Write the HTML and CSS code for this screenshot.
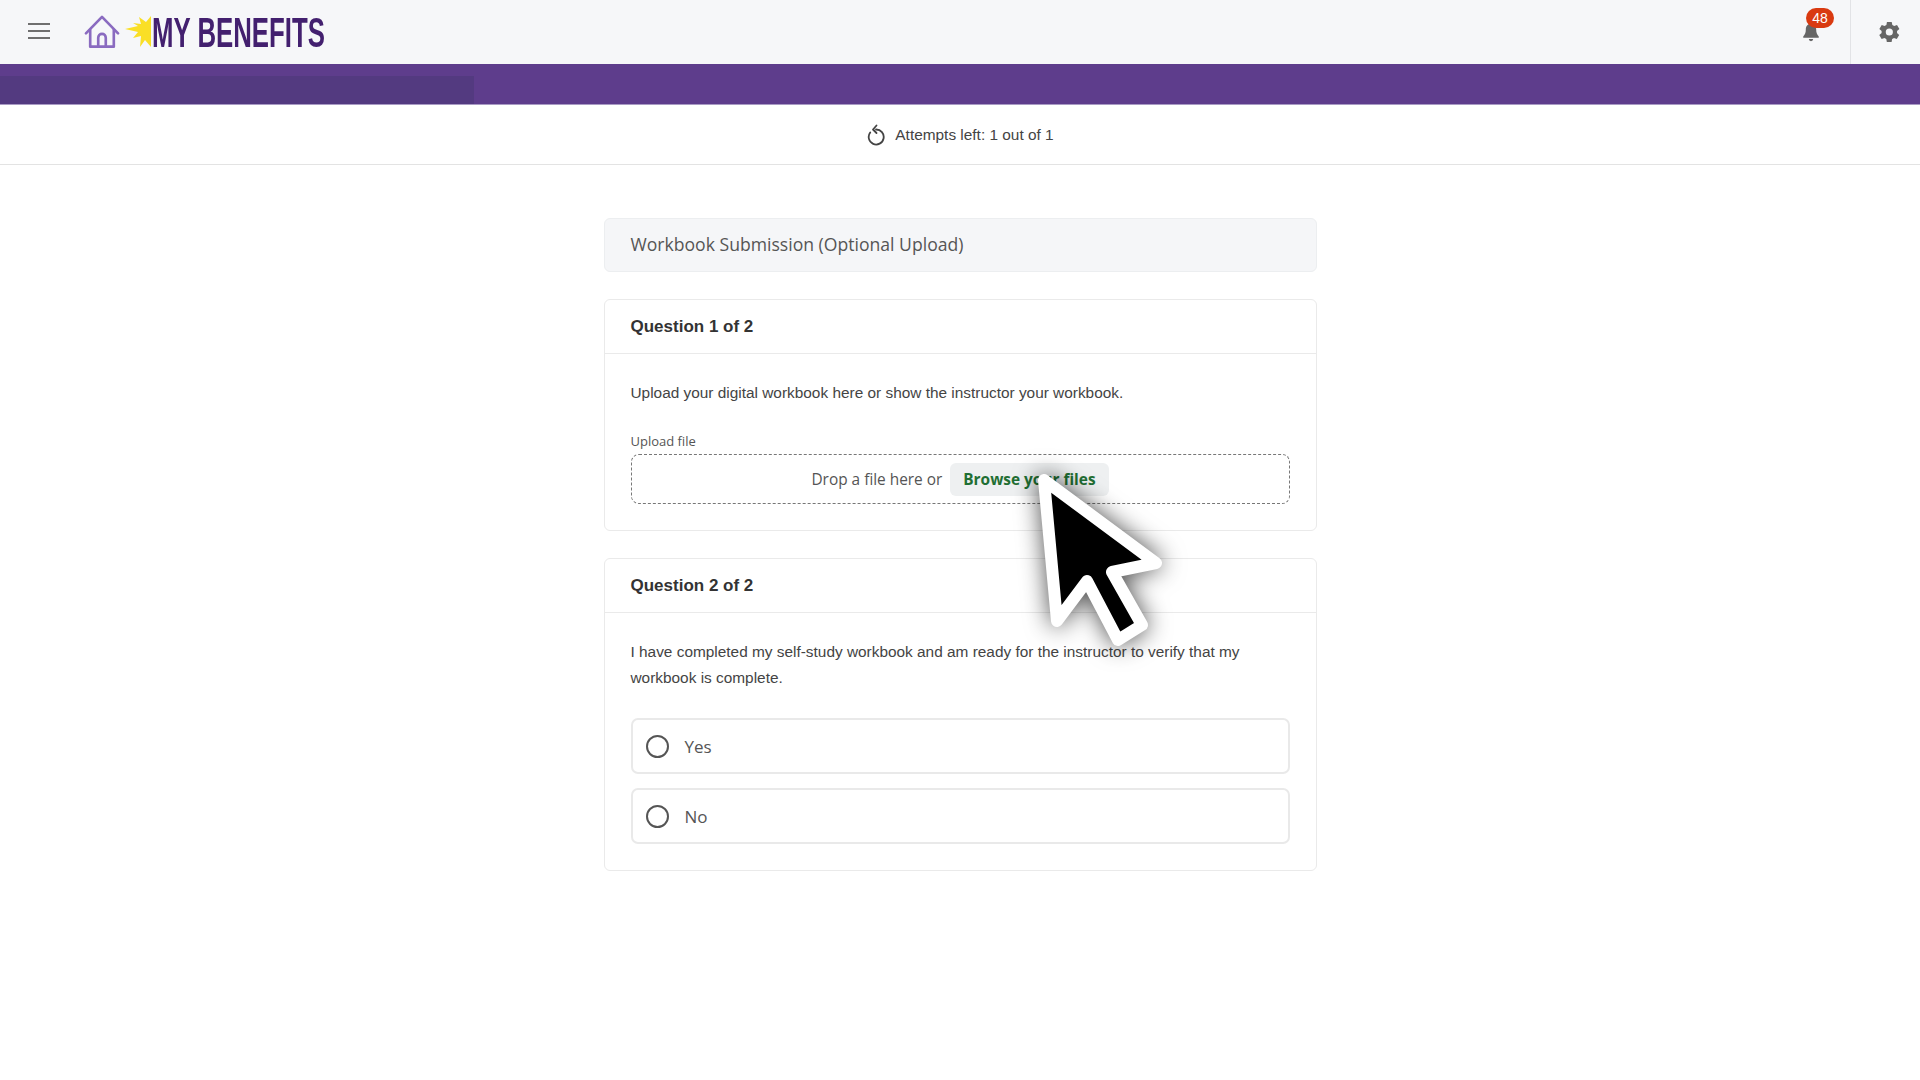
FILE: index.html
```html
<!DOCTYPE html>
<html lang="en">
<head>
    <meta charset="UTF-8">
    <meta name="viewport" content="width=device-width, initial-scale=1.0">
    <title>My Benefits</title>
    <link rel="stylesheet" href="styles.css">
</head>
<body>

    <!-- Header Section -->
    <header>
        <button class="menu-btn" aria-label="Menu">
            <svg width="22" height="16" viewBox="0 0 22 16"><path d="M0 1h22M0 8h22M0 15h22" stroke="#6f6f6f" stroke-width="2.200"/></svg>
        </button>
        <div class="logo">
            <svg class="logo-house" width="36" height="34" viewBox="0 0 38 36" fill="none" stroke="#8a6bc0" stroke-width="2.800" stroke-linejoin="round" stroke-linecap="round">
                <path d="M2 19.500 19 2l17 17.500"/>
                <path d="M6.500 16v17.500h25V16"/>
                <path d="M15 33.500V24a4 4 0 0 1 8 0v9.500"/>
            </svg>
            <svg class="logo-star" width="26" height="32" viewBox="0 0 26 32">
                <path d="M26 0 21 6 14 1l2 7-8-1 5 3-13 3 13 3-5 6 8-2-1 11 5-7 6 7z" fill="#fadf26"/>
            </svg>
            <span class="logo-text">MY BENEFITS</span>
        </div>
        <div class="header-right">
            <div class="bell">
                <svg width="18" height="19" viewBox="0 0 20 22"><path d="M10 1c-4 0-6 3-6 6.500 0 4-1 6-3 8v1.500h18v-1.500c-2-2-3-4-3-8C16 4 14 1 10 1zM7.500 18.500a2.500 2.500 0 0 0 5 0z" fill="#666"/></svg>
                <span class="badge">48</span>
            </div>
            <div class="gear">
                <svg width="26" height="26" viewBox="0 0 24 24"><path d="M19.400 13a7.500 7.500 0 0 0 0-2l2.200-1.700-2.200-3.800-2.600 1a7.500 7.500 0 0 0-1.700-1L14.500 2.700h-4.400l-.5 2.800a7.500 7.500 0 0 0-1.700 1l-2.600-1-2.200 3.800L5.200 11a7.500 7.500 0 0 0 0 2L3 14.700l2.200 3.800 2.600-1a7.500 7.500 0 0 0 1.700 1l.5 2.800h4.400l.5-2.800a7.500 7.500 0 0 0 1.700-1l2.600 1 2.200-3.800zM12.300 15.300a3.300 3.300 0 1 1 0-6.600 3.300 3.300 0 0 1 0 6.600z" fill="#666"/></svg>
            </div>
        </div>
    </header>

    <!-- Progress bar -->
    <div class="progress">
        <div class="progress-fill"></div>
    </div>

    <div class="attempts">
        <svg width="20" height="22" viewBox="0 0 20 22" fill="none" stroke="#444" stroke-width="1.800" stroke-linecap="round" stroke-linejoin="round">
            <path d="M4.200 8.500A7.500 7.500 0 1 0 10 5.500"/>
            <path d="M10.500 1.500 7 5.500l3.500 3.500"/>
        </svg>
        <span>Attempts left: 1 out of 1</span>
    </div>

    <!-- Quiz content -->
    <main class="container">
        <div class="title-card">Workbook Submission (Optional Upload)</div>

        <section class="card">
            <h2>Question 1 of 2</h2>
            <div class="card-body">
                <p>Upload your digital workbook here or show the instructor your workbook.</p>
                <label class="upload-label">Upload file</label>
                <div class="dropzone">
                    <span>Drop a file here or</span>
                    <button class="browse">Browse your files</button>
                </div>
            </div>
        </section>

        <section class="card">
            <h2>Question 2 of 2</h2>
            <div class="card-body">
                <p>I have completed my self-study workbook and am ready for the instructor to verify that my workbook is complete.</p>
                <div class="options">
                    <div class="option"><span class="radio"></span><span>Yes</span></div>
                    <div class="option"><span class="radio"></span><span>No</span></div>
                </div>
            </div>
        </section>
    </main>

    <!-- Big cursor laid over the page -->
    <svg class="cursor" width="160" height="210" viewBox="0 0 160 210">
        <path d="M14 14 126 97 82 106 112 159 88 174 57 115 27 155z" fill="#000" stroke="#fff" stroke-width="12" stroke-linejoin="round"/>
    </svg>

</body>
</html>
```

FILE: styles.css
```css
* {
    margin: 0;
    padding: 0;
    box-sizing: border-box;
}

body {
    font-family: "Liberation Sans", Arial, sans-serif;
    background-color: #fff;
    color: #333;
    height: 1080px;
    overflow: hidden;
    position: relative;
}

/* Header Section */
header {
    display: flex;
    align-items: center;
    height: 64px;
    padding-left: 28px;
    background-color: #f6f7f9;
}

.menu-btn {
    display: flex;
    border: none;
    background: none;
    margin-right: 34px;
    margin-top: -2px;
}

.logo {
    display: flex;
    align-items: center;
}

.logo-house {
    margin-right: 5px;
}

.logo-text {
    display: inline-block;
    width: 175px;
    margin-left: 1px;
    font-size: 43px;
    font-weight: bold;
    line-height: 43px;
    color: #43206f;
    white-space: nowrap;
    transform: scaleX(0.6);
    transform-origin: left center;
}

.header-right {
    display: flex;
    align-items: center;
    margin-left: auto;
    height: 100%;
}

.bell {
    position: relative;
    display: flex;
    margin-right: 30px;
}

.badge {
    position: absolute;
    top: -15px;
    left: 4px;
    width: 28px;
    height: 20px;
    border-radius: 10px;
    background-color: #d93a11;
    color: #fff;
    font-size: 14px;
    line-height: 20px;
    text-align: center;
}

.gear {
    display: flex;
    align-items: center;
    justify-content: center;
    width: 70px;
    height: 100%;
    padding-left: 6px;
    border-left: 1px solid #e2e3e6;
}

/* Progress bar */
.progress {
    height: 41px;
    background-color: #5e3d8c;
    border-bottom: 1px solid #a99bc4;
    padding-top: 12px;
}

.progress-fill {
    width: 474px;
    height: 28px;
    background-color: #533a80;
}

.attempts {
    display: flex;
    align-items: center;
    justify-content: center;
    gap: 9px;
    height: 60px;
    border-bottom: 1px solid #e3e3e3;
    font-size: 15.400px;
    color: #444;
}

/* Page Content Styling */
.container {
    width: 713px;
    margin: 53px auto 0;
    display: flex;
    flex-direction: column;
    gap: 27px;
}

.title-card {
    height: 54px;
    padding: 0 26px 2px;
    display: flex;
    align-items: center;
    background-color: #f5f6f8;
    border: 1px solid #eceef0;
    border-radius: 6px;
    font-family: "Open Sans", sans-serif;
    font-size: 17.600px;
    color: #555;
}

.card {
    border: 1px solid #eaeaea;
    border-radius: 6px;
}

.card h2 {
    height: 54px;
    padding: 0 26px;
    display: flex;
    align-items: center;
    border-bottom: 1px solid #eaeaea;
    font-size: 17px;
    color: #333;
}

.card-body {
    padding: 26px 26px 26px 26px;
}

.card-body p {
    font-size: 15.400px;
    line-height: 26px;
    color: #444;
}

.upload-label {
    display: block;
    margin-top: 26px;
    font-family: "Open Sans", sans-serif;
    font-size: 13px;
    line-height: 18px;
    color: #555;
}

.dropzone {
    display: flex;
    align-items: center;
    justify-content: center;
    gap: 8px;
    height: 50px;
    margin-top: 4px;
    border: 1px dashed #777;
    border-radius: 8px;
    font-family: "Open Sans", sans-serif;
    font-size: 15.400px;
    color: #555;
}

.browse {
    height: 33px;
    padding: 0 13px;
    border: none;
    border-radius: 6px;
    background-color: #eef0f1;
    font-family: "Open Sans", sans-serif;
    font-size: 15.400px;
    font-weight: bold;
    color: #1f6f33;
}

.options {
    display: flex;
    flex-direction: column;
    gap: 14px;
    margin-top: 27px;
}

.option {
    display: flex;
    align-items: center;
    gap: 16px;
    height: 56px;
    padding-left: 13px;
    border: 2px solid #e9e9e9;
    border-radius: 7px;
    font-family: "Open Sans", sans-serif;
    font-size: 17px;
    color: #555;
}

.radio {
    width: 23px;
    height: 23px;
    border: 2px solid #555;
    border-radius: 50%;
}

/* Overlay cursor */
.cursor {
    position: absolute;
    left: 1030px;
    top: 466px;
    filter: drop-shadow(0 0 12px rgba(0, 0, 0, 0.7));
}
```
